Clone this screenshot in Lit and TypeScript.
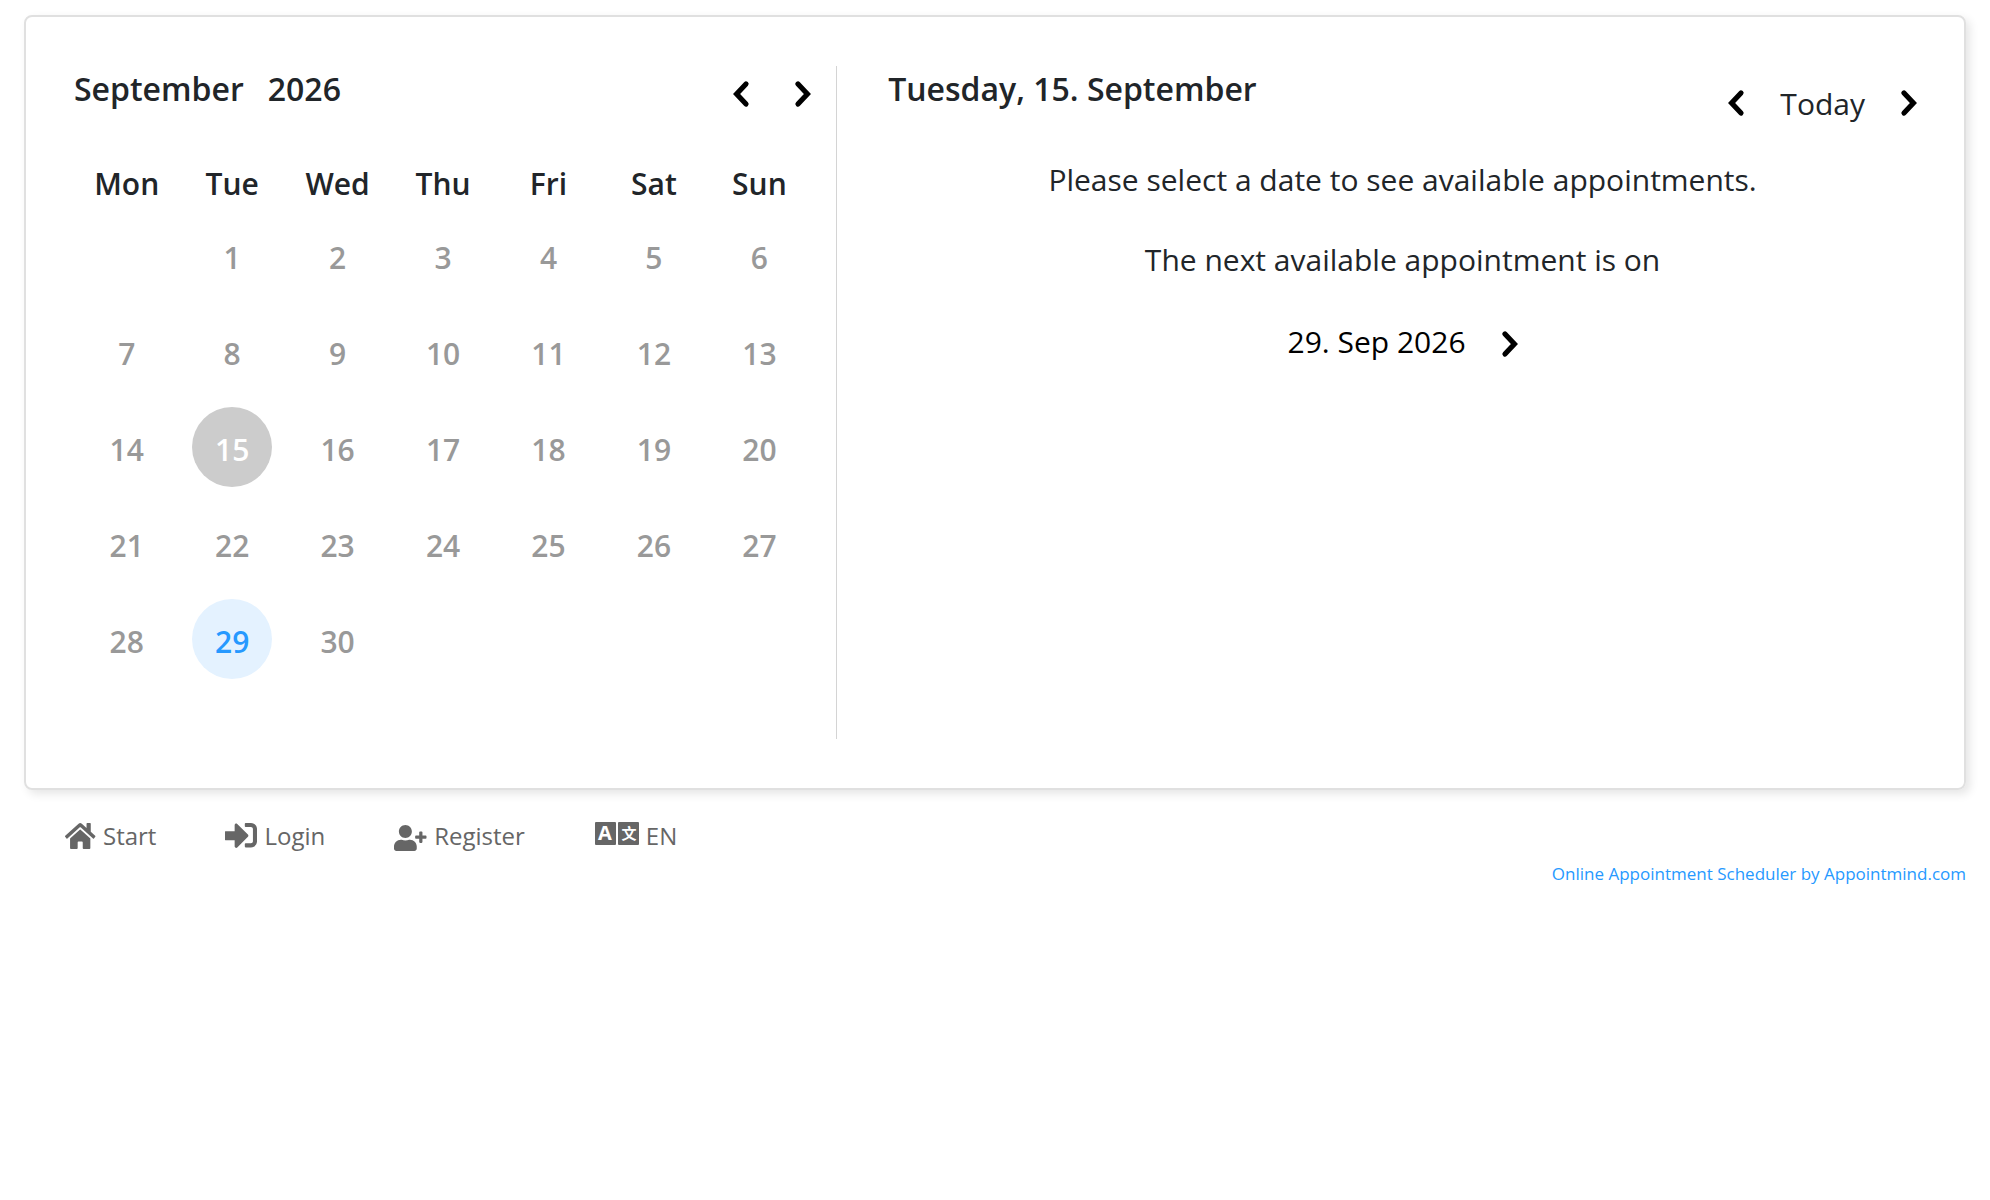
import { LitElement, html, svg, css, nothing } from "lit";
import { customElement, property, state } from "lit/decorators.js";
import { classMap } from "lit/directives/class-map.js";

const WEEKDAYS = ["Mon", "Tue", "Wed", "Thu", "Fri", "Sat", "Sun"];
const DAYS_IN_MONTH = 30;
const LEADING_BLANKS = 1;
const AVAILABLE_DAYS = [29];

const WEEKS: (number | null)[][] = Array.from({ length: 5 }, (_, week) =>
  WEEKDAYS.map((_, i) => {
    const day = week * 7 + i + 1 - LEADING_BLANKS;
    return day >= 1 && day <= DAYS_IN_MONTH ? day : null;
  })
);

const chevron = (direction: "left" | "right") => html`
  <svg class="chevron" width="16" height="26" viewBox="0 0 16 26" aria-hidden="true">
    <polyline
      points=${direction === "left" ? "13,3 3.6,13 13,23" : "3,3 12.4,13 3,23"}
      fill="none"
      stroke="currentColor"
      stroke-width="5.2"
      stroke-linecap="round"
    />
  </svg>
`;

const ICONS = {
  home: {
    width: 31,
    shape: svg`<path transform="translate(0 3) scale(.0528 .058) translate(0 -32)" d="M280.37 148.26L96 300.11V464a16 16 0 0 0 16 16l112.06-.29a16 16 0 0 0 15.92-16V368a16 16 0 0 1 16-16h64a16 16 0 0 1 16 16v95.64a16 16 0 0 0 16 16.05L464 480a16 16 0 0 0 16-16V300L295.67 148.26a12.19 12.19 0 0 0-15.3 0zM571.6 251.47L488 182.56V44.05a12 12 0 0 0-12-12h-56a12 12 0 0 0-12 12v72.61L318.47 43a48 48 0 0 0-61 0L4.34 251.47a12 12 0 0 0-1.6 16.9l25.5 31A12 12 0 0 0 45.15 301l235.22-193.74a12.19 12.19 0 0 1 15.3 0L530.9 301a12 12 0 0 0 16.9-1.6l25.5-31a12 12 0 0 0-1.7-16.93z"/>`,
  },
  login: {
    width: 32,
    shape: svg`<path transform="translate(0 3) scale(.0635) translate(-8 -64)" d="M416 448h-84c-6.6 0-12-5.4-12-12v-40c0-6.6 5.4-12 12-12h84c17.7 0 32-14.3 32-32V160c0-17.7-14.3-32-32-32h-84c-6.6 0-12-5.4-12-12V76c0-6.6 5.4-12 12-12h84c53 0 96 43 96 96v192c0 53-43 96-96 96zm-47-201L201 79c-15-15-41-4.5-41 17v96H24c-13.3 0-24 10.7-24 24v96c0 13.3 10.7 24 24 24h136v96c0 21.5 26 32 41 17l168-168c9.3-9.4 9.3-24.6 0-34z"/>`,
  },
  register: {
    width: 33,
    shape: svg`<path transform="translate(0 5) scale(.0508)" d="M624 208h-64v-64c0-8.8-7.2-16-16-16h-32c-8.8 0-16 7.2-16 16v64h-64c-8.8 0-16 7.2-16 16v32c0 8.8 7.2 16 16 16h64v64c0 8.8 7.2 16 16 16h32c8.8 0 16-7.2 16-16v-64h64c8.8 0 16-7.2 16-16v-32c0-8.8-7.2-16-16-16zm-400 48c70.7 0 128-57.3 128-128S294.7 0 224 0 96 57.3 96 128s57.3 128 128 128zm89.6 32h-16.7c-22.2 10.2-46.9 16-72.9 16s-50.6-5.8-72.9-16h-16.7C60.2 288 0 348.2 0 422.4V464c0 26.5 21.5 48 48 48h352c26.5 0 48-21.5 48-48v-41.6c0-74.2-60.2-134.4-134.4-134.4z"/>`,
  },
  language: {
    width: 45,
    shape: svg`
      <rect x="1" y="2" width="21" height="23" rx="1"/>
      <rect x="24" y="2" width="21" height="23" rx="1"/>
      <text class="glyph latin" x="11" y="20" text-anchor="middle">A</text>
      <text class="glyph cjk" x="35" y="19" text-anchor="middle">文</text>`,
  },
};
type IconName = keyof typeof ICONS;

const base = css`
  *, *::before, *::after { box-sizing: border-box; }
  h2, p { margin: 0; }
  button {
    margin: 0;
    padding: 0;
    border: 0;
    background: none;
    color: inherit;
    font: inherit;
    cursor: pointer;
  }
  .chevron { display: block; color: #000; overflow: visible; }
  .header { display: flex; justify-content: space-between; align-items: flex-start; }
  .title { font-size: 32px; line-height: 45px; font-weight: 600; }
`;

@customElement("month-calendar")
export class MonthCalendar extends LitElement {
  @property({ type: Number }) selected = 15;

  static styles = [
    base,
    css`
      :host { display: block; }
      .header { height: 93px; }
      .title { display: flex; gap: 24px; }
      .arrows { display: flex; gap: 46px; height: 55px; align-items: center; padding-right: 1px; }
      .days { width: 100%; table-layout: fixed; border-collapse: collapse; text-align: center; }
      th { height: 48px; padding: 0; font-weight: 600; }
      td { height: 96px; padding: 0; }
      .day {
        display: block;
        width: 80px;
        height: 80px;
        margin: 0 auto;
        padding-top: 4px;
        border-radius: 50%;
        color: #999;
        font-weight: 600;
      }
      .available { background: #e4f2ff; color: #2699ff; }
      .selected { background: #ccc; color: #fff; }
    `,
  ];

  private pick(day: number) {
    this.dispatchEvent(new CustomEvent("day-picked", { detail: day }));
  }

  render() {
    return html`
      <div class="header">
        <h2 class="title"><span>September</span><span>2026</span></h2>
        <div class="arrows">
          <button type="button" aria-label="Previous month">${chevron("left")}</button>
          <button type="button" aria-label="Next month">${chevron("right")}</button>
        </div>
      </div>
      <table class="days">
        <thead>
          <tr>${WEEKDAYS.map((name) => html`<th scope="col">${name}</th>`)}</tr>
        </thead>
        <tbody>
          ${WEEKS.map(
            (week) => html`<tr>
              ${week.map(
                (day) => html`<td>
                  ${day === null
                    ? nothing
                    : html`<button
                        type="button"
                        class=${classMap({
                          day: true,
                          available: AVAILABLE_DAYS.includes(day),
                          selected: day === this.selected,
                        })}
                        @click=${() => this.pick(day)}
                      >${day}</button>`}
                </td>`
              )}
            </tr>`
          )}
        </tbody>
      </table>
    `;
  }
}

@customElement("day-panel")
export class DayPanel extends LitElement {
  @property() heading = "";

  static styles = [
    base,
    css`
      :host { display: block; }
      .header { height: 90px; }
      .arrows { display: flex; gap: 36px; height: 74px; align-items: center; }
      .message { display: flex; flex-direction: column; align-items: center; gap: 32px; text-align: center; line-height: 48px; }
      .next { display: flex; align-items: center; gap: 36px; height: 52px; color: #000; }
      .next .chevron { margin-top: 4px; }
    `,
  ];

  render() {
    return html`
      <div class="header">
        <h2 class="title">${this.heading}</h2>
        <div class="arrows">
          <button type="button" aria-label="Previous day">${chevron("left")}</button>
          <button type="button">Today</button>
          <button type="button" aria-label="Next day">${chevron("right")}</button>
        </div>
      </div>
      <div class="message">
        <p>Please select a date to see available appointments.</p>
        <p>The next available appointment is on</p>
        <button type="button" class="next"><span>29. Sep 2026</span>${chevron("right")}</button>
      </div>
    `;
  }
}

@customElement("footer-nav")
export class FooterNav extends LitElement {
  static styles = [
    base,
    css`
      :host { display: block; color: #666; font-size: 24px; }
      .links { display: flex; flex-wrap: wrap; gap: 0 69px; padding-left: 41px; line-height: 50px; }
      .link { display: flex; align-items: center; gap: 7px; color: inherit; text-decoration: none; }
      .icon { display: block; fill: currentColor; }
      .glyph { fill: #fff; font-weight: 700; }
      .latin { font-family: "Open Sans", sans-serif; font-size: 20px; }
      .cjk { font-family: "Noto Sans CJK SC", sans-serif; font-size: 15px; }
    `,
  ];

  private link(name: IconName, label: string) {
    const icon = ICONS[name];
    return html`<a class="link" href="#${name}">
      <svg class="icon" width=${icon.width} height="32" viewBox="0 0 ${icon.width} 32" aria-hidden="true">${icon.shape}</svg>
      <span>${label}</span>
    </a>`;
  }

  render() {
    return html`<nav class="links">
      ${this.link("home", "Start")} ${this.link("login", "Login")}
      ${this.link("register", "Register")} ${this.link("language", "EN")}
    </nav>`;
  }
}

@customElement("app-root")
export class AppRoot extends LitElement {
  @state() private day = 15;

  static styles = [
    base,
    css`
      :host {
        display: block;
        padding: 15px 24px;
        background: #fff;
        color: #212529;
        font-family: "Segoe UI", "Open Sans", "Noto Sans", sans-serif;
        font-size: 30px;
      }
      .card {
        display: grid;
        grid-template-columns: 5fr 7fr;
        padding: 49px 22px;
        border: 2px solid #e0e0e0;
        border-radius: 8px;
        box-shadow: 4px 4px 10px rgba(0, 0, 0, 0.1);
      }
      .month { padding: 0 24px 52px 26px; border-right: 1px solid #d4d4d4; }
      .detail { padding: 0 25px 0 51px; }
      .nav { padding-top: 21px; }
      .credit { display: block; text-align: right; font-size: 17px; line-height: 26px; }
      .credit a { color: #2699ff; text-decoration: none; }
    `,
  ];

  private get heading() {
    const names = ["Sunday", "Monday", "Tuesday", "Wednesday", "Thursday", "Friday", "Saturday"];
    return `${names[new Date(2026, 8, this.day).getDay()]}, ${this.day}. September`;
  }

  render() {
    return html`
      <main class="card">
        <month-calendar
          class="month"
          .selected=${this.day}
          @day-picked=${(e: CustomEvent<number>) => (this.day = e.detail)}
        ></month-calendar>
        <day-panel class="detail" .heading=${this.heading}></day-panel>
      </main>
      <footer>
        <footer-nav class="nav"></footer-nav>
        <div class="credit">
          <a href="#appointmind">Online Appointment Scheduler by Appointmind.com</a>
        </div>
      </footer>
    `;
  }
}
